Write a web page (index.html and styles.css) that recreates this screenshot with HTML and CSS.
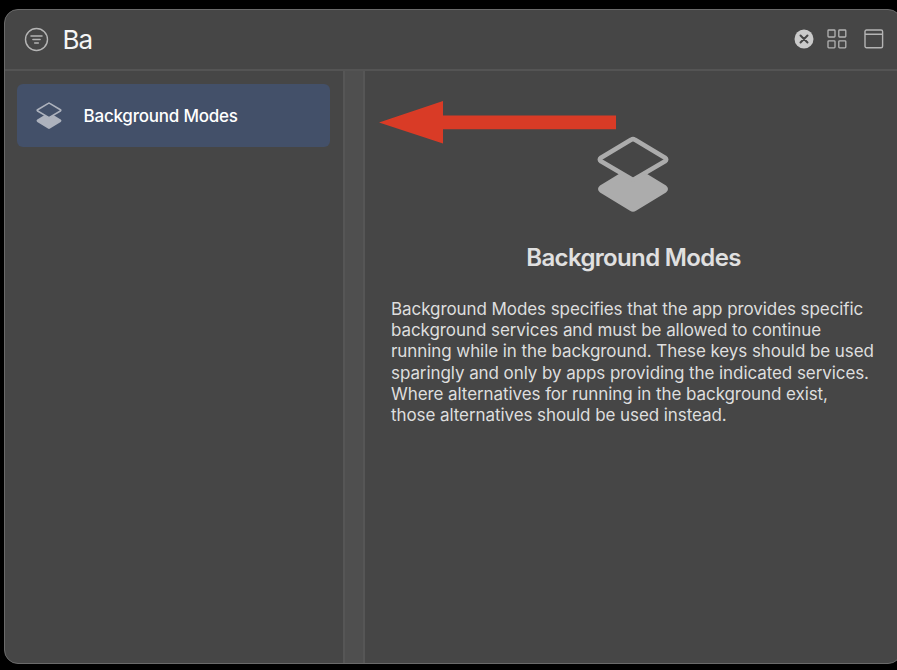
FILE: index.html
```html
<!DOCTYPE html>
<html lang="en">
<head>
<meta charset="utf-8">
<title>Capabilities</title>
<link rel="stylesheet" href="styles.css">
</head>
<body>
<svg class="defs" aria-hidden="true">
  <symbol id="layers" viewBox="0 0 72 76">
    <path d="M3 49.500 26 35.500 36 41.500 46 35.500 69 49.500Q73 53 69 56.500L39 74.800Q36 76.500 33 74.800L3 56.500Q-1 53 3 49.500Z" fill="currentColor"/>
    <path d="M34 3.800Q36 2.500 38 3.800L68 21.700Q70.500 23.500 68 25.300L36 44 4 25.300Q1.500 23.500 4 21.700Z" fill="var(--layer-hole)" stroke="currentColor" stroke-width="4.500" stroke-linejoin="round"/>
  </symbol>
</svg>
<div class="window">
  <header class="toolbar">
    <svg class="filter" viewBox="0 0 24 24" fill="none" stroke="currentColor">
      <circle cx="11.500" cy="12.500" r="11" stroke-width="1.400"/>
      <path d="M6 9h11M7.900 12.500h7.200M9.700 16h3.600" stroke-width="1.500" stroke-linecap="round"/>
    </svg>
    <div class="query">Ba</div>
    <svg class="clear" viewBox="0 0 20 20">
      <circle cx="10" cy="10" r="9.500" fill="#cacaca"/>
      <path d="M6.500 6.500l7 7M13.500 6.500l-7 7" stroke="#464646" stroke-width="2" stroke-linecap="round"/>
    </svg>
    <svg class="grid" viewBox="0 0 20 20" fill="none" stroke="currentColor" stroke-width="1.300">
      <rect x="1" y="1" width="7" height="7" rx=".8"/><rect x="11.800" y="1" width="7" height="7" rx=".8"/>
      <rect x="1" y="11.800" width="7" height="7" rx=".8"/><rect x="11.800" y="11.800" width="7" height="7" rx=".8"/>
    </svg>
    <svg class="panel" viewBox="0 0 20 20" fill="none" stroke="currentColor" stroke-width="1.400">
      <rect x="1" y="1" width="17.600" height="17.800" rx="1.500"/><path d="M1 5.300h17.600"/>
    </svg>
  </header>
  <main class="content">
    <nav class="list">
      <div class="item">
        <svg class="item-icon"><use href="#layers"/></svg>
        <span class="item-label">Background Modes</span>
      </div>
    </nav>
    <div class="divider"></div>
    <section class="detail">
      <svg class="arrow" viewBox="0 0 238 44"><path d="M0 21.500 64 0V14.500H237V28.300H64V42.500Z" fill="#d93b26"/></svg>
      <svg class="detail-icon"><use href="#layers"/></svg>
      <h1 class="title">Background Modes</h1>
      <p class="description">Background Modes specifies that the app provides specific<br>background services and must be allowed to continue<br>running while in the background. These keys should be used<br>sparingly and only by apps providing the indicated services.<br>Where alternatives for running in the background exist,<br>those alternatives should be used instead.</p>
    </section>
  </main>
</div>
</body>
</html>
```
FILE: styles.css
```css
* { box-sizing: border-box; }
body {
  margin: 0;
  height: 670px;
  padding: 9px 0 6px 4px;
  overflow: hidden;
  background: #000;
  font-family: Inter, "Liberation Sans", sans-serif;
}
svg { display: block; flex: none; overflow: visible; }
.defs { position: absolute; width: 0; height: 0; }
.window {
  width: 898px;
  height: 655px;
  display: flex;
  flex-direction: column;
  overflow: hidden;
  background: #464646;
  border: 1px solid #6a6a6a;
  border-radius: 14px;
}
.toolbar {
  height: 61px;
  flex: none;
  display: flex;
  align-items: center;
  padding: 0 0 1px 20px;
  border-bottom: 2px solid #545454;
  color: #b4b4b4;
}
.filter { width: 24px; height: 24px; }
.query {
  width: 745px;
  flex: none;
  padding: 2px 0 0 13.500px;
  font-size: 26px;
  line-height: 32px;
  letter-spacing: -.9px;
  color: #f5f5f5;
}
.clear { width: 20px; height: 20px; }
.grid { width: 20px; height: 20px; margin-left: 13px; }
.panel { width: 20px; height: 20px; margin-left: 17px; }
.content { flex: 1; display: flex; min-height: 0; }
.list { width: 338px; padding: 13px 13px 0 12px; }
.item {
  --layer-hole: #435069;
  height: 63px;
  display: flex;
  align-items: center;
  padding-left: 18.500px;
  border-radius: 6px;
  background: #435069;
}
.item-icon { width: 26px; height: 27px; color: #adb2bd; }
.item-label {
  margin-left: 22px;
  padding-top: 1px;
  font-size: 17px;
  font-weight: 500;
  letter-spacing: -.22px;
  white-space: nowrap;
  color: #fff;
}
.divider {
  width: 22px;
  background: #4f4f4f;
  border: solid #565656;
  border-width: 0 2px;
}
.detail {
  --layer-hole: #464646;
  position: relative;
  flex: 1;
  padding: 65px 0 0 26px;
}
.arrow { position: absolute; left: 14px; top: 30px; width: 238px; height: 44px; }
.detail-icon { width: 72px; height: 76px; margin-left: 206px; color: #acacac; }
.title {
  width: 485px;
  margin: 30px 0 0;
  text-align: center;
  font-size: 24px;
  line-height: 32px;
  font-weight: 600;
  letter-spacing: -.65px;
  color: #e0e0e0;
}
.description {
  margin: 25px 0 0;
  font-size: 17px;
  line-height: 21.200px;
  letter-spacing: -.075px;
  white-space: nowrap;
  color: #dedede;
}
```
